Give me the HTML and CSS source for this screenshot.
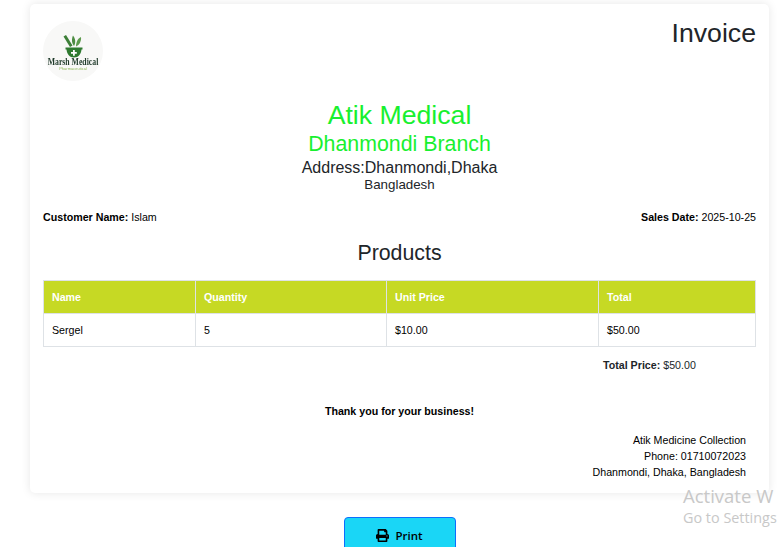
FILE: index.html
```html
<!DOCTYPE html>
<html lang="en">
<head>
<meta charset="utf-8">
<title>Invoice</title>
<link rel="stylesheet" href="styles.css">
</head>
<body>
<main class="card">
  <header class="top">
    <div class="logo">
      <svg class="logo-art" viewBox="0 0 60 60" width="60" height="60" aria-hidden="true">
        <circle cx="30" cy="30" r="30" fill="#f8f8f7"/>
        <path d="M23 14l6.500 10.500-2.500 1.500-6.500-10.500z" fill="#3c7f37"/>
        <path d="M31 25c-2.500-3-2.500-7-1-10.500 2.500 3 3 7 1 10.500z" fill="#4c8c42"/>
        <path d="M33 25.500c0-4 1.500-8 5-9.500 .5 4-1.500 8-5 9.500z" fill="#5d9b4d"/>
        <path d="M22.500 26.500h17v2h-1c-.5 4.500-3 8-7.500 8s-7-3.500-7.500-8h-1z" fill="#2f7a30"/>
        <path d="M30 29h1.800v2h2v1.800h-2v2H30v-2h-2V31h2z" fill="#fff"/>
      </svg>
      <span class="logo-name">Marsh Medical</span>
      <span class="logo-sub">Pharmaceutical</span>
    </div>
    <h1 class="doc-title">Invoice</h1>
  </header>

  <section class="branch">
    <div class="b-name">Atik Medical</div>
    <div class="b-sub">Dhanmondi Branch</div>
    <div class="b-addr">Address:Dhanmondi,Dhaka</div>
    <div class="b-country">Bangladesh</div>
  </section>

  <section class="meta">
    <div><b>Customer Name:</b> Islam</div>
    <div><b>Sales Date:</b> 2025-10-25</div>
  </section>

  <h2 class="products">Products</h2>

  <table class="items">
    <thead>
      <tr><th class="c1">Name</th><th class="c2">Quantity</th><th class="c3">Unit Price</th><th class="c4">Total</th></tr>
    </thead>
    <tbody>
      <tr><td>Sergel</td><td>5</td><td>$10.00</td><td>$50.00</td></tr>
    </tbody>
  </table>

  <div class="total-row"><div class="total"><b>Total Price:</b> $50.00</div></div>

  <p class="thanks">Thank you for your business!</p>

  <address class="contact">
    <div>Atik Medicine Collection</div>
    <div>Phone: 01710072023</div>
    <div>Dhanmondi, Dhaka, Bangladesh</div>
  </address>
</main>

<div class="actions">
  <button class="print" type="button">
    <svg class="print-icon" viewBox="0 0 512 512" width="13" height="13" aria-hidden="true"><path d="M448 192V77.250c0-8.490-3.370-16.620-9.370-22.630L393.370 9.370c-6-6-14.140-9.370-22.630-9.370H96C78.330 0 64 14.330 64 32v160c-35.350 0-64 28.650-64 64v112c0 8.840 7.160 16 16 16h48v96c0 17.670 14.330 32 32 32h320c17.670 0 32-14.330 32-32v-96h48c8.840 0 16-7.160 16-16V256c0-35.350-28.650-64-64-64zm-64 256H128v-96h256v96zm0-224H128V64h192v48c0 8.840 7.160 16 16 16h48v96zm48 72c-13.250 0-24-10.750-24-24 0-13.260 10.750-24 24-24s24 10.740 24 24c0 13.250-10.750 24-24 24z"/></svg>
    <span>Print</span>
  </button>
</div>

<div class="watermark">
  <div class="wm-1">Activate W</div>
  <div class="wm-2">Go to Settings</div>
</div>
</body>
</html>
```
FILE: styles.css
```css
* { box-sizing: border-box; }
html, body { height: 547px; overflow: hidden; }
body {
  margin: 0;
  background: #fff;
  font-family: "Liberation Sans", Arial, sans-serif;
  color: #212529;
  position: relative;
}
.card {
  width: 739px;
  height: 489px;
  margin: 4px 0 0 30px;
  padding: 17px 13px 0;
  background: #fff;
  border-radius: 5px;
  box-shadow: 0 0 10px rgba(0, 0, 0, .1);
}
.top { display: flex; justify-content: space-between; align-items: flex-start; height: 60px; }
.logo { position: relative; width: 60px; height: 60px; filter: blur(.35px); }
.logo-art { display: block; }
.logo-name {
  position: absolute; left: 0; right: 0; top: 36px;
  text-align: center; white-space: nowrap;
  font: bold 8px/9px "Liberation Serif", serif; color: #1f3a2a;
  transform: scale(.97, 1.25);
}
.logo-sub {
  position: absolute; left: 0; right: 0; top: 46px;
  text-align: center; white-space: nowrap;
  font: 4px/4px "Liberation Sans", sans-serif; color: #8fb85a;
}
.doc-title { margin: -4px 0 0; font-size: 26.670px; line-height: 32px; font-weight: 400; }
.branch { margin-top: 18px; text-align: center; }
.b-name { font-size: 26.670px; line-height: 32px; color: #18f02f; }
.b-sub { font-size: 21.330px; line-height: 25px; margin-top: 1px; color: #18f02f; }
.b-addr { font-size: 16px; line-height: 20px; margin-top: 1px; color: #212529; }
.b-country { font-size: 13.330px; line-height: 13px; color: #212529; }
.meta { display: flex; justify-content: space-between; margin-top: 19px; font-size: 10.670px; line-height: 14px; color: #000; }
.products { margin: 17px 0 0; text-align: center; font-size: 21.330px; line-height: 24px; font-weight: 400; }
.items { width: 713px; margin-top: 15px; border-collapse: collapse; table-layout: fixed; font-size: 10.670px; }
.items th, .items td { border: 1px solid #dee2e6; padding: 0 8px; height: 33px; text-align: left; }
.items th { background: #c6d924; color: #fff; font-weight: 700; }
.items td { color: #000; }
.c1 { width: 152px; }
.c2 { width: 191px; }
.c3 { width: 212px; }
.total-row { display: flex; margin-top: 11px; padding-left: 560px; }
.total { font-size: 10.670px; line-height: 14px; color: #212529; }
.thanks { margin: 32px 0 0; text-align: center; font-size: 10.670px; line-height: 14px; font-weight: 700; color: #000; }
.contact { margin-top: 14px; padding-right: 10px; text-align: right; font-style: normal; font-size: 10.670px; line-height: 16px; color: #000; }
.actions { display: flex; justify-content: center; margin-top: 24px; padding-left: 22px; }
.print {
  width: 112px; height: 38px; padding: 0 0 2px;
  display: flex; justify-content: center; align-items: center; gap: 6px;
  background: #1ad6f6; border: 1px solid #0d6efd; border-radius: 4px;
  font: 600 11.500px "Open Sans", sans-serif; color: #000;
}
.print-icon { display: block; }
.watermark {
  position: absolute; left: 683px; top: 483px; white-space: nowrap;
  font-family: "Open Sans", sans-serif; color: #c8c8c8;
}
.wm-1 { font-size: 18.500px; line-height: 25px; }
.wm-2 { font-size: 14.400px; line-height: 20px; }
```
